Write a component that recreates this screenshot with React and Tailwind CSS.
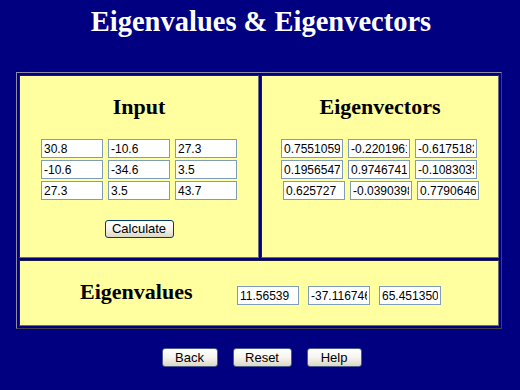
import React from "react";

const serif = "font-['Liberation_Serif','Times_New_Roman',serif]";
const sans = "font-['Liberation_Sans',Arial,sans-serif]";

const Field = ({ value, className = "" }) => (
  <input
    readOnly
    value={value}
    className={`h-[19px] w-[62px] border border-[#7f9db9] bg-white px-[2px] text-[12px] leading-[17px] text-black outline-none ${sans} ${className}`}
  />
);

const XpButton = ({ children, className = "" }) => (
  <button
    className={`h-[18px] rounded-[3px] border border-[#003c74] bg-linear-to-b from-white via-[#f5f4ee] to-[#dcd8c6] text-[13px] leading-[14px] text-black ${sans} ${className}`}
  >
    {children}
  </button>
);

const Cell = ({ children, className = "" }) => (
  <div
    className={`border border-t-[#1c1c3c] border-l-[#1c1c3c] border-r-[#6b6b7a] border-b-[#6b6b7a] bg-[#ffffa0] ${className}`}
  >
    {children}
  </div>
);

const matrix = [
  ["30.8", "-10.6", "27.3"],
  ["-10.6", "-34.6", "3.5"],
  ["27.3", "3.5", "43.7"],
];

const vectors = [
  ["0.7551059469", "-0.2201961784", "-0.6175182307"],
  ["0.1956547312", "0.9746741385", "-0.1083035927"],
  ["0.625727", "-0.0390398521", "0.7790646331"],
];

const values = ["11.56539", "-37.1167468", "65.4513508"];

export default function App() {
  return (
    <div className="min-h-screen w-full bg-[#000080]">
      <h1
        className={`pt-[4px] pl-[2px] text-center text-[28.5px] leading-[36px] font-bold text-white ${serif}`}
      >
        Eigenvalues &amp; Eigenvectors
      </h1>

      <div className="ml-[16px] mt-[32px] w-[486px] border border-t-[#8c8ca8] border-l-[#8c8ca8] border-r-[#404048] border-b-[#404048] p-[2px]">
        <div className="grid grid-cols-[240px_238px] gap-[2px]">
          <Cell className="flex h-[183px] flex-col items-center pt-[17px]">
            <h2 className={`h-[28px] text-[22px] leading-[28px] font-bold text-black ${serif}`}>
              Input
            </h2>
            <div className="mt-[18px] flex flex-col gap-[2px]">
              {matrix.map((row, i) => (
                <div key={i} className="flex gap-[5px]">
                  {row.map((v, j) => (
                    <Field key={j} value={v} />
                  ))}
                </div>
              ))}
            </div>
            <XpButton className="mt-[20px] w-[69px]">Calculate</XpButton>
          </Cell>

          <Cell className="flex h-[183px] flex-col items-center pt-[17px]">
            <h2 className={`h-[28px] text-[22px] leading-[28px] font-bold text-black ${serif}`}>
              Eigenvectors
            </h2>
            <div className="mt-[18px] flex flex-col gap-[2px]">
              {vectors.map((row, i) => (
                <div key={i} className={`flex gap-[5px] ${i === 2 ? "pl-[2px]" : "pr-[2px]"}`}>
                  {row.map((v, j) => (
                    <Field key={j} value={v} />
                  ))}
                </div>
              ))}
            </div>
          </Cell>

          <Cell className="col-span-2 flex h-[66px] items-start">
            <h2
              className={`ml-[60px] mt-[17px] h-[28px] w-[157px] text-[22px] leading-[28px] font-bold text-black ${serif}`}
            >
              Eigenvalues
            </h2>
            <div className="mt-[25px] flex gap-[9px]">
              {values.map((v, i) => (
                <Field key={i} value={v} />
              ))}
            </div>
          </Cell>
        </div>
      </div>

      <div className="mt-[19px] flex justify-center gap-[15px] pl-[3px]">
        <XpButton className="h-[19px] w-[56px] border-[#4a5a8c]">Back</XpButton>
        <XpButton className="h-[19px] w-[59px] border-[#4a5a8c]">Reset</XpButton>
        <XpButton className="h-[19px] w-[55px] border-[#4a5a8c]">Help</XpButton>
      </div>
    </div>
  );
}
